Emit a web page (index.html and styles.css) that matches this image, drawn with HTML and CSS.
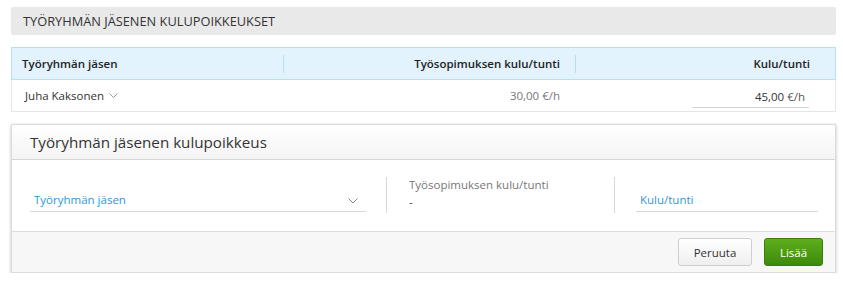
FILE: index.html
```html
<!DOCTYPE html>
<html lang="fi">
<head>
<meta charset="utf-8">
<link rel="stylesheet" href="styles.css">
</head>
<body>
<div class="page">
  <div class="section-title">TYÖRYHMÄN JÄSENEN KULUPOIKKEUKSET</div>

  <div class="table">
    <div class="thead">
      <div class="th c1">Työryhmän jäsen</div>
      <div class="th c2">Työsopimuksen kulu/tunti</div>
      <div class="th c3">Kulu/tunti</div>
    </div>
    <div class="trow">
      <div class="td c1">Juha Kaksonen
        <svg class="chev-s" width="9" height="6" viewBox="0 0 9 6"><path d="M0.5 0.5 L4.5 4.5 L8.5 0.5" fill="none" stroke="#999" stroke-width="1"/></svg>
      </div>
      <div class="td c2 muted">30,00 €/h</div>
      <div class="td c3"><div class="inline-input">45,00 <span class="unit">€/h</span></div></div>
    </div>
  </div>

  <div class="card">
    <div class="card-head">Työryhmän jäsenen kulupoikkeus</div>
    <div class="card-body">
      <div class="field f1">
        <div class="select">
          <span class="ph">Työryhmän jäsen</span>
          <svg width="10" height="6" viewBox="0 0 10 6"><path d="M0.5 0.5 L5 5 L9.5 0.5" fill="none" stroke="#888" stroke-width="1"/></svg>
        </div>
      </div>
      <div class="vsep"></div>
      <div class="field f2">
        <div class="ro-label">Työsopimuksen kulu/tunti</div>
        <div class="ro-value">-</div>
      </div>
      <div class="vsep"></div>
      <div class="field f3">
        <div class="input"><span class="ph">Kulu/tunti</span></div>
      </div>
    </div>
    <div class="card-foot">
      <button class="btn btn-default">Peruuta</button>
      <button class="btn btn-primary">Lisää</button>
    </div>
  </div>
</div>
</body>
</html>
```

FILE: styles.css
```css
* { box-sizing: border-box; }
html, body { margin: 0; padding: 0; background: #fff; }
body {
  font-family: "Open Sans", "Noto Sans", sans-serif;
  font-size: 12px;
  color: #333;
}
.page { padding: 7px 7px 0 11px; }

.section-title {
  height: 28px;
  background: #e9e9e9;
  border-radius: 2px;
  padding-left: 12px;
  line-height: 28px;
  font-size: 12.8px;
  color: #333;
}

.table { margin-top: 12px; }
.thead {
  display: grid;
  grid-template-columns: 272px 292px 261px;
  height: 33px;
  background: #e2f3fd;
  border: 1px solid #b7dff5;
  align-items: center;
}
.th {
  font-weight: 600;
  font-size: 11.5px;
  color: #222;
  height: 18px;
  line-height: 18px;
}
.th.c1 { padding-left: 10px; border-right: 1px solid #b7dff5; }
.th.c2 { text-align: right; padding-right: 15px; border-right: 1px solid #b7dff5; }
.th.c3 { text-align: right; padding-right: 27px; }

.trow {
  display: grid;
  grid-template-columns: 272px 292px 261px;
  height: 32px;
  border: 1px solid #e6e6e6;
  border-top: 0;
  align-items: center;
}
.td { font-size: 11.5px; }
.td.c1 { padding-left: 13px; color: #333; display: flex; align-items: center; gap: 5px; }
.chev-s { margin-top: 1px; }
.td.c2 { text-align: right; padding-right: 16px; }
.muted { color: #777; }
.td.c3 { display: flex; justify-content: flex-end; padding-right: 28px; }
.inline-input {
  width: 117px;
  text-align: right;
  padding-right: 4px;
  border-bottom: 1px solid #d4d4d4;
  height: 20px;
  line-height: 18px;
  margin-top: 5px;
  color: #333;
}
.unit { color: #555; }

.card {
  margin-top: 12px;
  border: 1px solid #dcdcdc;
  box-shadow: 0 1px 3px rgba(0,0,0,0.25);
  background: #fff;
}
.card-head {
  height: 35px;
  background: linear-gradient(#ffffff, #f4f4f4);
  border-bottom: 1px solid #d6d6d6;
  padding-left: 18px;
  line-height: 34px;
  font-size: 15.2px;
  color: #333;
}
.card-body {
  height: 71px;
  display: flex;
  align-items: flex-start;
  padding: 17px 17px 0 18px;
}
.vsep {
  width: 1px;
  height: 36px;
  background: #d6d6d6;
}
.field.f1 { width: 336px; margin-right: 20px; }
.field.f2 { width: 227px; padding-left: 22px; }
.field.f3 { flex: 1; padding-left: 21px; }
.select, .input {
  margin-top: 11px;
  height: 24px;
  border-bottom: 1px solid #d8d8d8;
  display: flex;
  align-items: center;
  justify-content: space-between;
  padding: 0 4px;
}
.select svg { margin-right: 4px; margin-top: 2px; }
.ph { color: #2f96d9; font-size: 11.5px; }
.ro-label { color: #777; font-size: 11.5px; line-height: 16px; }
.ro-value { color: #444; font-size: 11.5px; line-height: 18px; }

.card-foot {
  height: 41px;
  background: #f7f7f7;
  border-top: 1px solid #dcdcdc;
  display: flex;
  justify-content: flex-end;
  align-items: center;
  gap: 12px;
  padding-right: 12px;
}
.btn {
  font-family: "Open Sans", "Noto Sans", sans-serif;
  font-size: 11.5px;
  height: 28px;
  border-radius: 3px;
  padding: 0 13px;
  cursor: pointer;
}
.btn-default {
  width: 74px;
  background: linear-gradient(#ffffff, #efefef);
  border: 1px solid #cfcfcf;
  color: #333;
}
.btn-primary {
  width: 59px;
  background: linear-gradient(#5fae1c, #3c8a0c);
  border: 1px solid #3a7d0e;
  color: #fff;
}
```
